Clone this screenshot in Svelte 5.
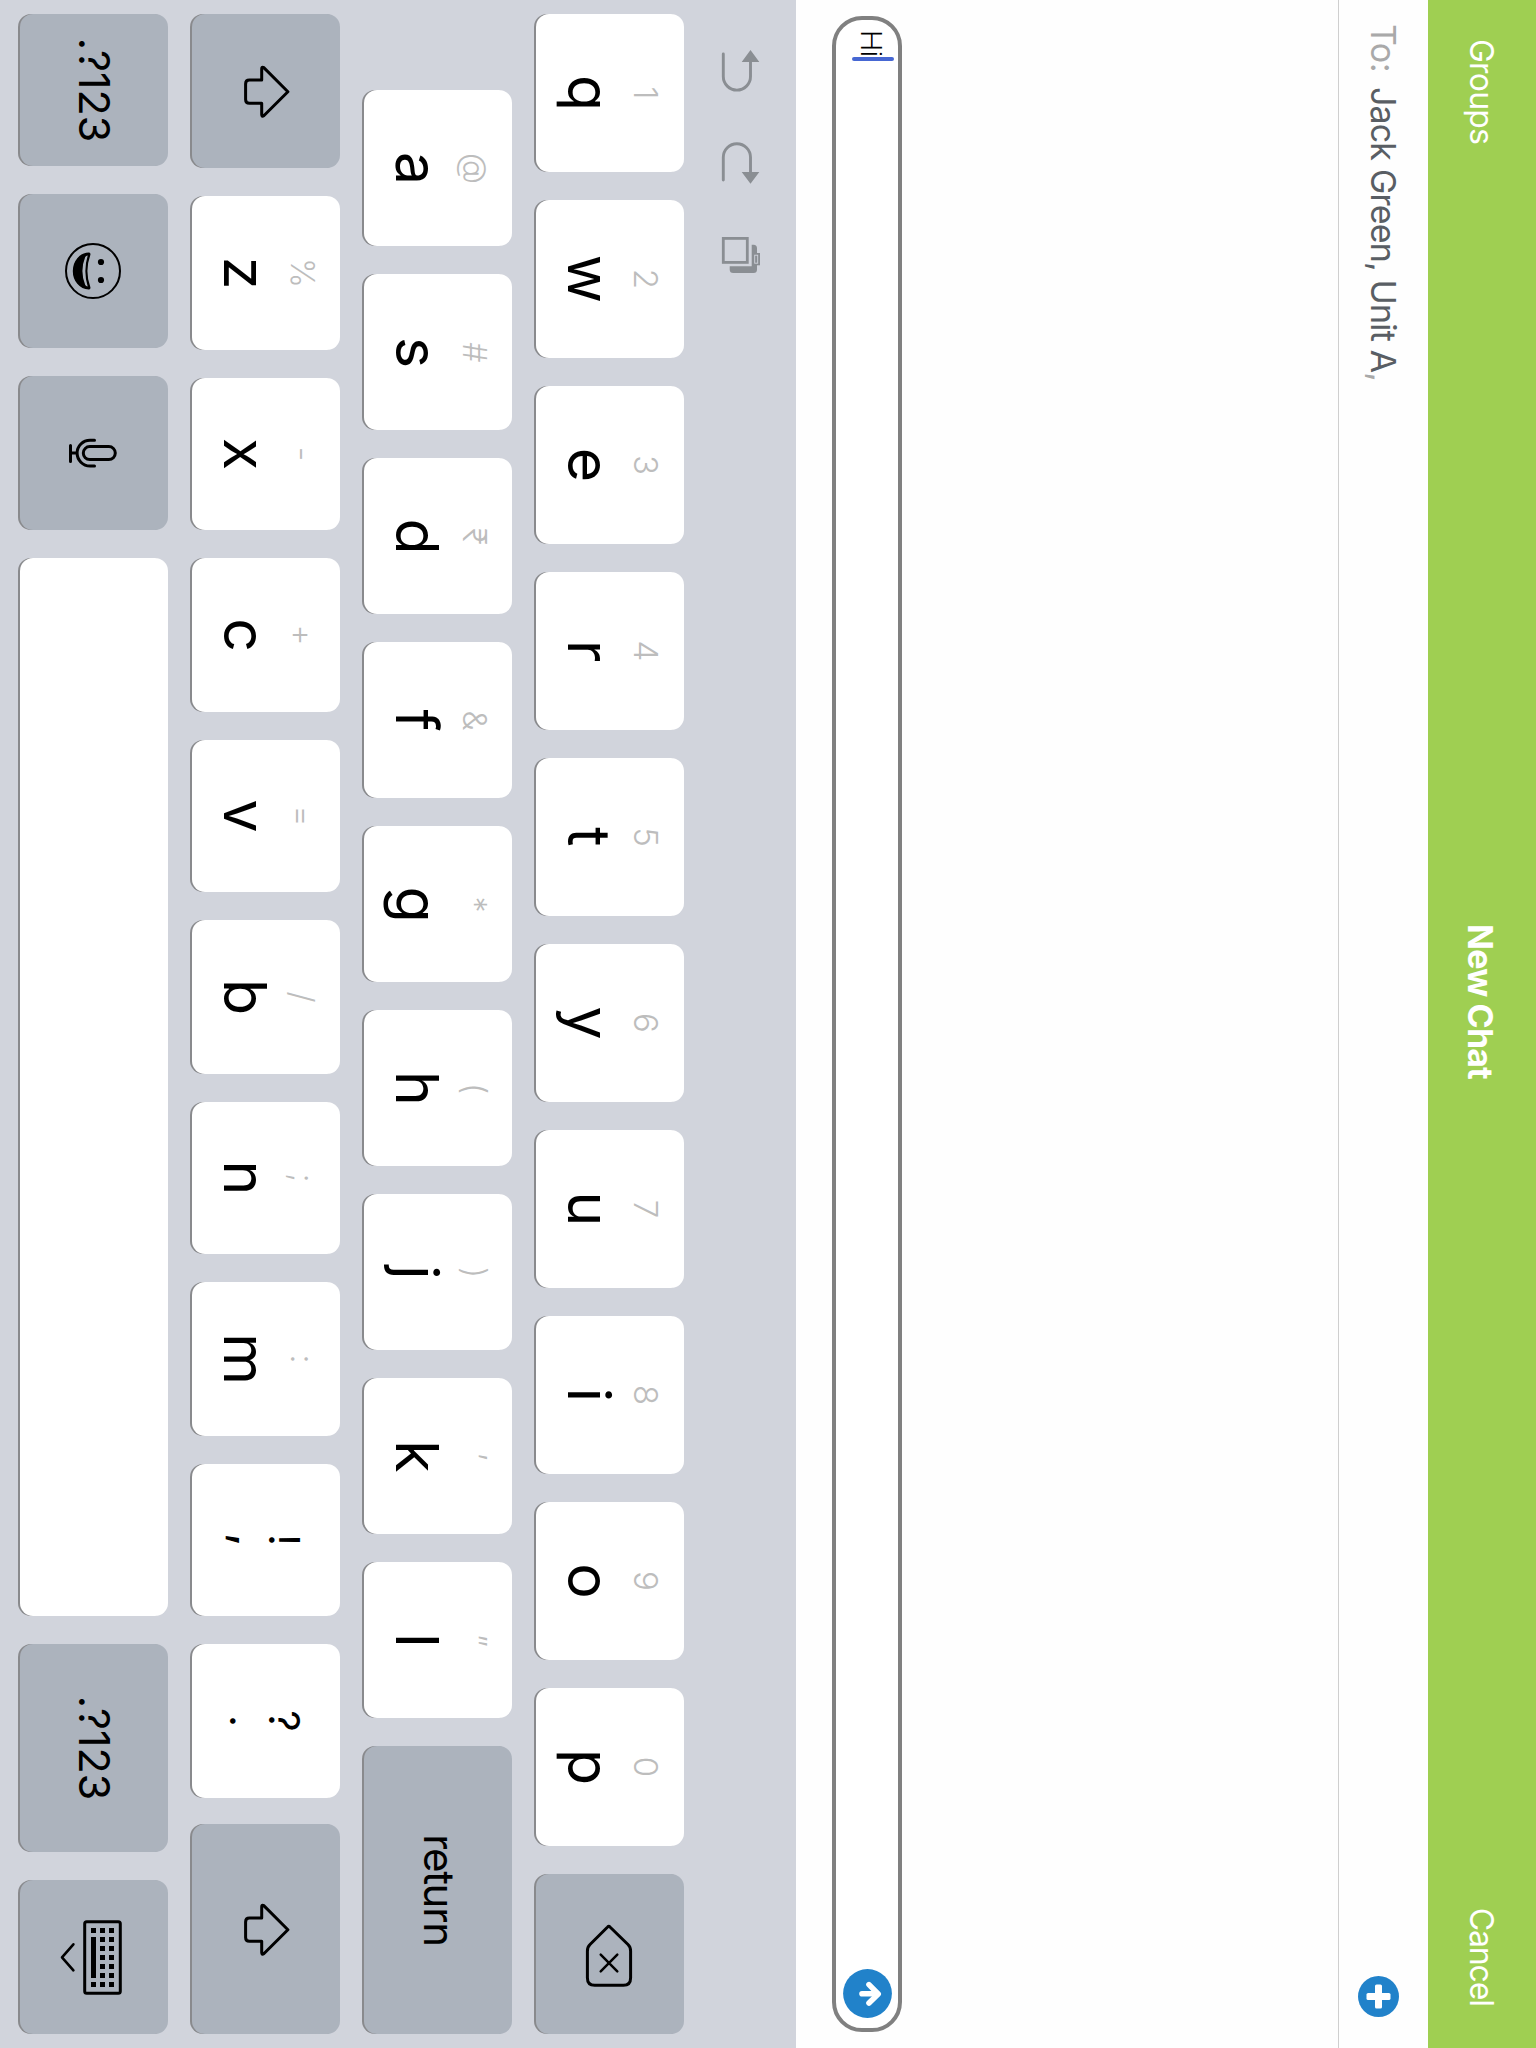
<script>
  const letter = (main, hint) => ({ kind: 'letter', main, hint });
  const rows = [
    {
      id: 'top',
      keys: [...'qwertyuiop'].map((c, i) => letter(c, '1234567890'[i])).concat([{ kind: 'backspace' }])
    },
    {
      id: 'home',
      keys: [...'asdfghjkl']
        .map((c, i) => letter(c, ['@', '#', '₹', '&', '*', '(', ')', '’', '”'][i]))
        .concat([{ kind: 'label', text: 'return' }])
    },
    {
      id: 'lower',
      keys: [
        { kind: 'shift' },
        ...[...'zxcvbnm'].map((c, i) => letter(c, '%-+=/;:'[i])),
        { kind: 'pair', upper: '!', lower: ',' },
        { kind: 'pair', upper: '?', lower: '.' },
        { kind: 'shift' }
      ]
    },
    {
      id: 'bottom',
      keys: [
        { kind: 'label', text: '.?123' },
        { kind: 'emoji' },
        { kind: 'mic' },
        { kind: 'space' },
        { kind: 'label', text: '.?123' },
        { kind: 'dismiss' }
      ]
    }
  ];
  const light = ['letter', 'pair', 'space'];
  const dotCols = [-29, -20, -11, -2, 7, 16, 25];
</script>

<div class="device">
  <div class="screen">
    <header class="nav">
      <span class="nav-side groups">Groups</span>
      <span class="title">New Chat</span>
      <span class="nav-side cancel">Cancel</span>
    </header>

    <div class="recipients">
      <span class="to">To:</span>
      <span class="names">Jack Green, Unit A<span class="comma">,</span></span>
      <svg class="add" viewBox="0 0 41 41">
        <circle cx="20.5" cy="20.5" r="20.5" fill="#2182ca" />
        <rect x="8.5" y="17" width="24" height="7" rx="1.6" fill="#fff" />
        <rect x="17" y="8.5" width="7" height="24" rx="1.6" fill="#fff" />
      </svg>
    </div>

    <main class="thread">
      <div class="compose">
        <span class="typed">Hi</span><span class="caret"></span>
        <svg class="send" viewBox="0 0 49 49">
          <circle cx="24.5" cy="24.5" r="24.4" fill="#2182ca" />
          <g fill="none" stroke="#fff" stroke-width="5.6" stroke-linecap="round" stroke-linejoin="round">
            <path d="M15.6 23L25 13.8L34 23" />
            <path d="M24.8 30V16" />
          </g>
        </svg>
      </div>
    </main>

    <section class="keyboard">
      <svg class="tools" viewBox="0 0 300 112">
        <g fill="none" stroke="#8a8e93" stroke-width="2.9" stroke-linecap="round">
          <path d="M60 45.5H76.5A13.6 13.6 0 0 1 76.5 72.7H54" />
          <path d="M174 45.5H157.3A13.6 13.6 0 0 0 157.3 72.7H180" />
        </g>
        <path fill="#8a8e93" d="M50 45.5L62 36.7V54.3ZM183.7 45.5L172 36.7V54.3Z" />
        <rect x="238.4" y="48.7" width="24" height="24" fill="none" stroke="#8a8e93" stroke-width="2.8" />
        <path fill="#8a8e93" d="M244.7 44.3V42.5A3.5 3.5 0 0 1 248.2 39H269.5A3.5 3.5 0 0 1 273 42.5V62.8A3.5 3.5 0 0 1 269.5 66.3H266.3V44.3Z" />
        <rect x="253" y="36" width="12.3" height="7.8" fill="#8a8e93" />
        <rect x="255.2" y="38.3" width="8" height="3" fill="none" stroke="#d1d4dc" stroke-width="0.9" />
      </svg>

      {#each rows as row (row.id)}
        <div class="row {row.id}">
          {#each row.keys as key}
            <div class="key {key.kind}" class:light={light.includes(key.kind)}>
              {#if key.kind === 'letter'}
                <span class="hint">{key.hint}</span>
                <span class="main">{key.main}</span>
              {:else if key.kind === 'pair'}
                <span>{key.upper}</span>
                <span class:raised={key.lower === ','}>{key.lower}</span>
              {:else if key.kind === 'label'}
                <span class:numeric={key.text !== 'return'}>{key.text}</span>
              {:else if key.kind === 'shift'}
                <svg class="glyph" viewBox="-50 0 100 148">
                  <path d="M.7 52.1L24.8 76.2Q26.1 78.3 23.6 78.3H12.3V90.6Q12.3 94.4 8.5 94.4H-7.1Q-10.9 94.4 -10.9 90.6V78.3H-22.2Q-24.7 78.3 -23.4 76.2Z" />
                </svg>
              {:else if key.kind === 'backspace'}
                <svg class="glyph" viewBox="-50 0 100 148">
                  <path d="M-27 74Q-28.3 75.2 -27 76.4L-9.5 94Q-7 96.6 -3 96.6H24Q31.3 96.6 31.3 89.3V60.6Q31.3 53.4 24 53.4H-3Q-7 53.4 -9.5 56Z" />
                  <path d="M.7 66.7L17.3 83.3M17.3 66.7L.7 83.3" stroke-width="2.5" />
                </svg>
              {:else if key.kind === 'emoji'}
                <svg class="glyph" viewBox="-50 0 100 148">
                  <circle cx="0" cy="75" r="27" stroke-width="2" />
                  <circle cx="-9" cy="67" r="3.1" fill="#000" stroke="none" />
                  <circle cx="9" cy="67" r="3.1" fill="#000" stroke="none" />
                  <path d="M-17.8 79.2C-17.5 88 -9.5 94.4 0 94.4S17.5 88 17.8 79.2Q17.6 78 16 78.5Q0 84.3 -16 78.5Q-17.6 78 -17.8 79.2Z" fill="#000" stroke-width="1.6" />
                  <path d="M-15.5 80.3Q0 85 15.5 80.3Q15.2 82 14 82.8Q0 88.4 -14 82.8Q-15.2 82 -15.5 80.3Z" fill="#acb3bd" stroke="none" />
                </svg>
              {:else if key.kind === 'mic'}
                <svg class="glyph" viewBox="-50 0 100 148">
                  <rect x="-6.4" y="52.7" width="13" height="32" rx="6.5" />
                  <path d="M-12.8 73.5V78A12.9 12.9 0 0 0 13 78V73.5M.1 91V97.5M-7.6 97.5H8.4" />
                </svg>
              {:else if key.kind === 'dismiss'}
                <svg class="glyph" viewBox="-50 0 100 148">
                  <rect x="-35.3" y="47.7" width="71.6" height="35.6" rx="2" />
                  <g fill="#000" stroke="none">
                    {#each dotCols as x}
                      <rect {x} y="54" width="5" height="5" />
                      <rect {x} y="63" width="5" height="5" />
                    {/each}
                    <rect x="-29" y="72" width="5" height="5" />
                    <rect x="-20" y="72" width="41" height="5" />
                    <rect x="25" y="72" width="5" height="5" />
                  </g>
                  <path d="M-12.7 94.6L.3 106L13.3 94.6" stroke-width="2.6" />
                </svg>
              {/if}
            </div>
          {/each}
        </div>
      {/each}
    </section>
  </div>
</div>

<style>
  :global(body) {
    margin: 0;
    background: #fff;
  }
  .device {
    width: 1536px;
    height: 2048px;
    overflow: hidden;
  }
  /* Landscape screen, turned a quarter clockwise. */
  .screen {
    width: 2048px;
    height: 1536px;
    transform: translateX(1536px) rotate(90deg);
    transform-origin: 0 0;
    display: flex;
    flex-direction: column;
    background: #fefefe;
    font-family: Inter, 'Liberation Sans', sans-serif;
    color: #000;
  }
  .nav {
    box-sizing: border-box;
    height: 108px;
    padding: 0 42px 0 39px;
    display: grid;
    grid-template-columns: 1fr auto 1fr;
    align-items: center;
    background: #9fcf52;
    color: #fff;
  }
  .nav-side {
    font-size: 32px;
    font-weight: 370;
    letter-spacing: -0.8px;
  }
  .cancel {
    text-align: right;
    letter-spacing: -1.1px;
  }
  .title {
    font-size: 34px;
    font-weight: 700;
    line-height: 40px;
    letter-spacing: -0.8px;
    padding-top: 3px;
    margin-left: -44px;
    margin-right: -2px;
  }
  .recipients {
    box-sizing: border-box;
    height: 90px;
    padding: 0 31px 0 24px;
    border-bottom: 1px solid #cfcfcf;
    display: flex;
    align-items: center;
    font-size: 34px;
    white-space: nowrap;
  }
  .to {
    color: #a9a9a9;
    margin-right: 15px;
    letter-spacing: -0.5px;
  }
  .names {
    color: #595e64;
    letter-spacing: -0.85px;
  }
  .comma {
    color: #a9a9a9;
  }
  .add {
    width: 41px;
    height: 41px;
    margin-left: auto;
    margin-top: 9px;
  }
  .thread {
    height: 542px;
    display: flex;
    flex-direction: column;
    justify-content: flex-end;
    padding: 0 16px 36px;
    box-sizing: border-box;
  }
  .compose {
    box-sizing: border-box;
    height: 70px;
    border: 4px solid #808080;
    border-radius: 30px;
    padding: 0 10px 0 10px;
    display: flex;
    align-items: center;
    background: #fff;
  }
  .typed {
    font-family: Roboto, 'Liberation Sans', sans-serif;
    font-weight: 350;
    font-size: 30px;
    letter-spacing: -0.7px;
    padding-bottom: 9px;
  }
  .caret {
    width: 4px;
    height: 42px;
    border-radius: 2px;
    background: #4667d3;
    margin: 0 0 12px 0;
  }
  .send {
    width: 49px;
    height: 49px;
    margin-left: auto;
    margin-bottom: 2px;
  }
  .keyboard {
    height: 796px;
    background: #d1d4dc;
    display: flex;
    flex-direction: column;
  }
  .tools {
    width: 300px;
    height: 112px;
    flex: none;
  }
  .row {
    display: grid;
    gap: 28px;
    height: 148px;
    margin-bottom: 24px;
    padding: 0 14px;
  }
  .row.top {
    grid-template-columns: repeat(10, 158px) 160px;
  }
  .row.home {
    grid-template-columns: repeat(9, 156px) 288px;
    padding-left: 90px;
  }
  .row.lower {
    grid-template-columns: 154px 154px 152px 154px 152px 154px 152px 154px 152px 154px 208px;
  }
  .row.lower .shift:last-child {
    margin-left: -2px;
  }
  .row.bottom {
    grid-template-columns: 152px 154px 154px 1058px 208px 154px;
    margin-bottom: 20px;
  }
  .key {
    box-sizing: border-box;
    height: 148px;
    border-radius: 13px;
    background: #acb3bd;
    box-shadow: 0 2px 0 #898a8d;
    display: flex;
    flex-direction: column;
    align-items: center;
  }
  .key.light {
    background: #fff;
  }
  .letter {
    padding-top: 18px;
    gap: 5px;
  }
  .hint {
    font-size: 33px;
    line-height: 40px;
    font-weight: 320;
    color: #bdbdbd;
  }
  .home .hint,
  .lower .hint {
    font-size: 32px;
  }
  .home .letter {
    padding-left: 1px;
  }
  .main {
    font-size: 59px;
    font-weight: 385;
    line-height: 64px;
  }
  .pair {
    padding-top: 36px;
    font-size: 42px;
    line-height: 39px;
  }
  .raised {
    font-size: 48px;
    margin-top: -6px;
  }
  .label {
    justify-content: center;
    padding-bottom: 3px;
    font-size: 42px;
    letter-spacing: -1.3px;
  }
  .numeric {
    font-size: 43px;
    letter-spacing: 0;
    font-kerning: none;
  }
  .glyph {
    width: 100px;
    height: 148px;
    fill: none;
    stroke: #000;
    stroke-width: 3;
    stroke-linecap: round;
    stroke-linejoin: round;
  }
</style>
